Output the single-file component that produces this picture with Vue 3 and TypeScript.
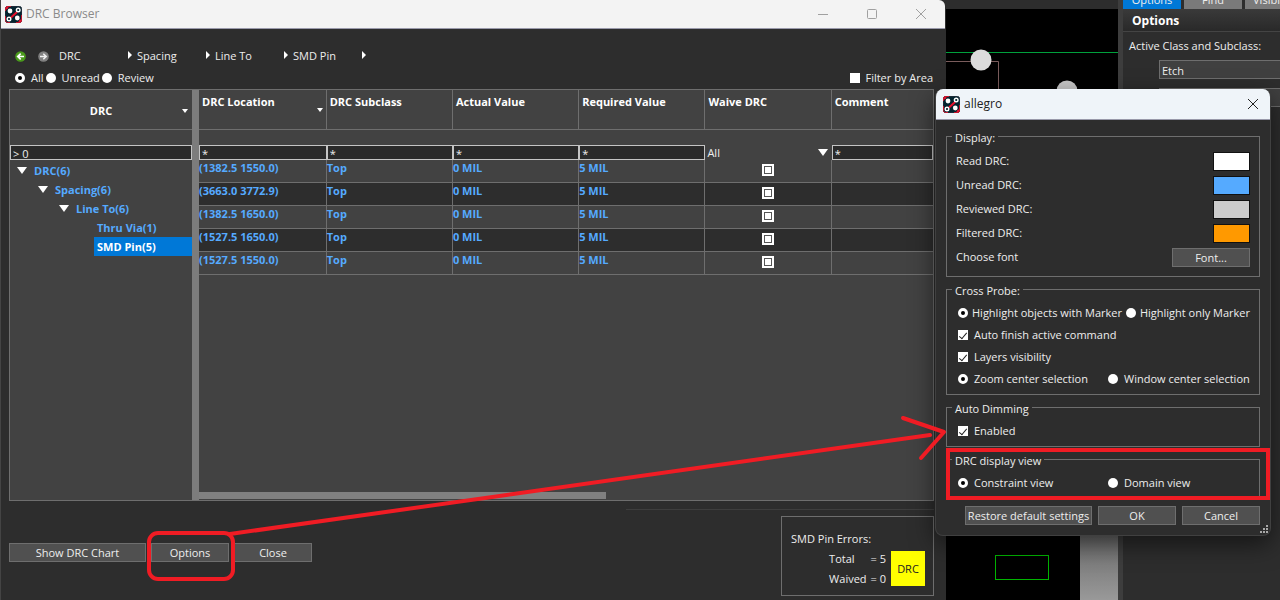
<script setup lang="ts">
import { ref } from 'vue'

const crumbs = ['DRC', 'Spacing', 'Line To', 'SMD Pin']
const scopes = ['All', 'Unread', 'Review']
const scope = ref('All')
const filterByArea = ref(false)

interface TreeNode { label: string; level: number; leaf?: boolean; selected?: boolean }
const tree: TreeNode[] = [
  { label: 'DRC(6)', level: 0 },
  { label: 'Spacing(6)', level: 1 },
  { label: 'Line To(6)', level: 2 },
  { label: 'Thru Via(1)', level: 3, leaf: true },
  { label: 'SMD Pin(5)', level: 3, leaf: true, selected: true },
]

const columns = ['DRC Location', 'DRC Subclass', 'Actual Value', 'Required Value', 'Waive DRC', 'Comment']
const rows = ['(1382.5 1550.0)', '(3663.0 3772.9)', '(1382.5 1650.0)', '(1527.5 1650.0)', '(1527.5 1550.0)']
const filters = ref(['*', '*', '*', '*', 'All', '*'])
const treeFilter = ref('> 0')

const colors = [
  { label: 'Read DRC:', cls: 'white' },
  { label: 'Unread DRC:', cls: 'blue' },
  { label: 'Reviewed DRC:', cls: 'silver' },
  { label: 'Filtered DRC:', cls: 'orange' },
]
const marker = ref('objects')
const center = ref('zoom')
const view = ref('constraint')
const autoFinish = ref(true)
const layers = ref(true)
const dimming = ref(true)
</script>

<template>
  <main class="desktop">
    <svg width="0" height="0" class="defs" aria-hidden="true">
      <symbol id="logo" viewBox="0 0 17 17">
        <rect x="0.5" y="0.5" width="16" height="16" rx="2" fill="#04232f" stroke="#1b2b38" />
        <path d="M0.5 5V2.5a2 2 0 0 1 2-2H6M0.500 10V14.500a2 2 0 0 0 2 2H5M16.500 9V14.500a2 2 0 0 1-2 2H11" fill="none" stroke="#c4142c" />
        <path d="M6 11.5L12 6" stroke="#e8112d" stroke-width="2" />
        <path d="M1 3L3 1M14 16l2-2" stroke="#e8112d" stroke-width="2" />
        <circle cx="5" cy="5" r="2.4" fill="#fff" />
        <circle cx="12.3" cy="12" r="2.4" fill="#fff" />
        <circle cx="13.2" cy="4" r="1.8" fill="none" stroke="#fff" stroke-width="1.4" />
        <circle cx="4" cy="13" r="1.8" fill="none" stroke="#fff" stroke-width="1.4" />
      </symbol>
    </svg>

    <div class="backdrop">
      <div class="board">
        <svg class="board-top" viewBox="0 0 172 100" width="172" height="100" aria-hidden="true">
          <path d="M0 52.500H172" stroke="#00a03c" />
          <path d="M0 61.5H52.5V100" fill="none" stroke="#7a5c5c" />
          <circle cx="35" cy="60" r="10.5" fill="#dcdcdc" />
          <circle cx="121" cy="91" r="10.5" fill="#c8c8c8" />
        </svg>
        <div class="board-bottom">
          <svg class="outline" width="54" height="25" viewBox="0 0 54 25" aria-hidden="true">
            <rect x="0.5" y="0.5" width="53" height="24" fill="none" stroke="#00b400" />
          </svg>
          <div class="board-edge"></div>
        </div>
      </div>
      <aside class="side">
        <nav class="tabs">
          <button class="tab active" type="button">Options</button>
          <button class="tab" type="button">Find</button>
          <button class="tab" type="button">Visibility</button>
        </nav>
        <h2 class="side-title">Options</h2>
        <label class="side-label" for="cls">Active Class and Subclass:</label>
        <select id="cls" class="side-select"><option>Etch</option></select>
        <select class="side-select" aria-label="Subclass"></select>
      </aside>
    </div>

    <section class="window browser">
      <header class="titlebar">
        <svg class="logo" width="17" height="17"><use href="#logo" /></svg>
        <h1>DRC Browser</h1>
        <button class="caption" type="button" aria-label="Minimize"><svg width="12" height="12"><path d="M1 6.500H11" /></svg></button>
        <button class="caption" type="button" aria-label="Maximize"><svg width="12" height="12"><rect x="1.500" y="1.500" width="9" height="9" rx="1" /></svg></button>
        <button class="caption" type="button" aria-label="Close"><svg width="12" height="12"><path d="M1 1L11 11M11 1L1 11" /></svg></button>
      </header>
      <div class="browser-body">
        <nav class="crumbs">
          <button class="nav" type="button" aria-label="Back">
            <svg width="11" height="11" viewBox="0 0 11 11"><circle cx="5.500" cy="5.500" r="5.300" fill="#4a9a1c" /><path d="M9 5.500H3M5.700 2.700L2.800 5.500L5.700 8.300" fill="none" stroke="#fff" stroke-width="1.700" /></svg>
          </button>
          <button class="nav" type="button" aria-label="Forward">
            <svg width="11" height="11" viewBox="0 0 11 11"><circle cx="5.500" cy="5.500" r="5.300" fill="#808080" /><path d="M2 5.500H8M5.300 2.700L8.200 5.500L5.300 8.300" fill="none" stroke="#f0f0f0" stroke-width="1.500" /></svg>
          </button>
          <button v-for="c in crumbs" :key="c" class="crumb" type="button">
            <span>{{ c }}</span>
            <svg width="4" height="8"><path d="M0 0L4 4L0 8Z" fill="#fff" /></svg>
          </button>
        </nav>
        <div class="scope">
          <label v-for="s in scopes" :key="s"><input v-model="scope" type="radio" name="scope" :value="s" />{{ s }}</label>
          <label class="area"><input v-model="filterByArea" type="checkbox" />Filter by Area</label>
        </div>

        <div class="panes">
          <div class="tree-pane">
            <div class="tree-head">DRC<svg width="6" height="4"><path d="M0 0H6L3 4Z" fill="#fff" /></svg></div>
            <div class="gap-row"></div>
            <input v-model="treeFilter" class="filter" type="text" aria-label="Filter tree" />
            <ul class="tree">
              <li v-for="n in tree" :key="n.label" :class="['level-' + n.level, { selected: n.selected }]">
                <svg v-if="!n.leaf" width="10" height="7"><path d="M0 0H10L5 7Z" fill="#fff" /></svg>
                <span>{{ n.label }}</span>
              </li>
            </ul>
          </div>
          <div class="splitter"></div>
          <div class="grid-pane">
            <table>
              <colgroup>
                <col class="first" /><col class="mid" /><col class="mid" /><col class="mid" /><col class="mid" /><col />
              </colgroup>
              <thead>
                <tr class="heads">
                  <th v-for="(c, i) in columns" :key="c" scope="col">
                    <div class="head"><span>{{ c }}</span><svg v-if="i === 0" width="6" height="4"><path d="M0 0H6L3 4Z" fill="#fff" /></svg></div>
                  </th>
                </tr>
                <tr class="spacer"><td colspan="6"></td></tr>
                <tr class="filters">
                  <td v-for="(c, i) in columns" :key="c">
                    <div v-if="i === 4" class="pick">
                      <select v-model="filters[i]" :aria-label="'Filter ' + c"><option>All</option></select>
                      <svg width="10" height="7"><path d="M0 0H10L5 7Z" fill="#fff" /></svg>
                    </div>
                    <input v-else v-model="filters[i]" class="filter" type="text" :aria-label="'Filter ' + c" />
                  </td>
                </tr>
              </thead>
              <tbody>
                <tr v-for="r in rows" :key="r">
                  <td>{{ r }}</td>
                  <td>Top</td>
                  <td>0 MIL</td>
                  <td>5 MIL</td>
                  <td class="waive"><input type="checkbox" :aria-label="'Waive ' + r" /></td>
                  <td></td>
                </tr>
              </tbody>
            </table>
            <div class="scrollbar"></div>
          </div>
        </div>

        <footer class="browser-foot">
          <div class="actions">
            <button class="btn chart" type="button">Show DRC Chart</button>
            <button class="btn" type="button">Options</button>
            <button class="btn" type="button">Close</button>
          </div>
          <div class="summary">
            <div class="errors">
              <p>SMD Pin Errors:</p>
              <dl>
                <dt>Total</dt><dd>= 5</dd>
                <dt>Waived</dt><dd>= 0</dd>
              </dl>
              <span class="badge">DRC</span>
            </div>
          </div>
        </footer>
      </div>
    </section>

    <section class="window dialog" role="dialog" aria-label="allegro">
      <header class="titlebar">
        <svg class="logo" width="17" height="17"><use href="#logo" /></svg>
        <h1>allegro</h1>
        <button class="caption" type="button" aria-label="Close dialog"><svg width="12" height="12"><path d="M1 1L11 11M11 1L1 11" /></svg></button>
      </header>
      <form class="dialog-body" @submit.prevent>
        <fieldset class="display">
          <legend>Display:</legend>
          <div v-for="c in colors" :key="c.cls" class="line">
            <span :id="'color-' + c.cls">{{ c.label }}</span>
            <button type="button" :class="['swatch', c.cls]" :aria-labelledby="'color-' + c.cls"></button>
          </div>
          <div class="line"><span>Choose font</span><button class="btn" type="button">Font...</button></div>
        </fieldset>
        <fieldset class="probe">
          <legend>Cross Probe:</legend>
          <div class="choices tight">
            <label><input v-model="marker" type="radio" name="marker" value="objects" />Highlight objects with Marker</label>
            <label><input v-model="marker" type="radio" name="marker" value="only" />Highlight only Marker</label>
          </div>
          <div class="choices"><label><input v-model="autoFinish" type="checkbox" />Auto finish active command</label></div>
          <div class="choices"><label><input v-model="layers" type="checkbox" />Layers visibility</label></div>
          <div class="choices">
            <label><input v-model="center" type="radio" name="center" value="zoom" />Zoom center selection</label>
            <label><input v-model="center" type="radio" name="center" value="window" />Window center selection</label>
          </div>
        </fieldset>
        <fieldset class="single">
          <legend>Auto Dimming</legend>
          <div class="choices"><label><input v-model="dimming" type="checkbox" />Enabled</label></div>
        </fieldset>
        <fieldset class="single">
          <legend>DRC display view</legend>
          <div class="choices">
            <label><input v-model="view" type="radio" name="view" value="constraint" />Constraint view</label>
            <label><input v-model="view" type="radio" name="view" value="domain" />Domain view</label>
          </div>
        </fieldset>
        <div class="dialog-actions">
          <button class="btn restore" type="button">Restore default settings</button>
          <button class="btn" type="button">OK</button>
          <button class="btn" type="button">Cancel</button>
        </div>
      </form>
      <svg class="grip" width="8" height="8" aria-hidden="true"><path d="M6 0h2v2H6zM3 3h2v2H3zM6 3h2v2H6zM0 6h2v2H0zM3 6h2v2H3zM6 6h2v2H6z" fill="#a8a8a8" /></svg>
    </section>

    <svg class="notes" viewBox="0 0 1280 600" preserveAspectRatio="xMinYMin meet" aria-hidden="true">
      <g fill="none" stroke="#f01c24" stroke-width="4" stroke-linecap="round" stroke-linejoin="round">
        <rect x="149" y="533" width="84" height="46" rx="9" />
        <path d="M230 534L930 435" />
        <path d="M903 418L944 432L921 458" />
        <path d="M948 450H1268V498H948Z" stroke-linejoin="miter" />
      </g>
    </svg>
  </main>
</template>

<style>
body { background: #2d2d2d; }
</style>

<style scoped>
.desktop { position: relative; min-height: 100vh; overflow: hidden; background: #2d2d2d; color: #eee; font: 11px/16px "Open Sans", "Noto Sans", sans-serif; }
.desktop *, .desktop *::before { box-sizing: border-box; }
.defs { position: absolute; }
button, input, select { font: inherit; color: inherit; margin: 0; padding: 0; border: 0; background: none; border-radius: 0; appearance: none; }
h1, h2, p, ul, dl, dd { margin: 0; padding: 0; }

.backdrop { display: flex; justify-content: flex-end; min-height: 100vh; }
.board { display: flex; flex-direction: column; width: 172px; margin-top: 9px; background: #000; }
.board-top { display: block; margin-top: -9px; }
.board-bottom { flex: 1; display: flex; justify-content: space-between; }
.outline { margin: 455px 0 0 49px; }
.board-edge { width: 38px; margin-top: 430px; background: linear-gradient(#666, #999); }
.side { width: 162px; border-left: 5px solid #3d3d3d; background: #2d2d2d; overflow: hidden; white-space: nowrap; }
.tabs { display: flex; gap: 3px; height: 9px; align-items: flex-end; overflow: hidden; }
.tab { flex: none; width: 58px; height: 18px; background: #7a7a7a; color: #eee; }
.tab.active { background: #0078d7; }
.side-title { height: 23px; padding: 4px 9px; border-bottom: 1px solid #444; background: linear-gradient(#3a3a3a, #292929); font-size: 12px; font-weight: 700; color: #fff; }
.side-label { display: block; margin: 6px 6px; }
.side-select { display: block; width: 130px; height: 19px; margin: 0 0 9px 36px; padding: 2px 2px 0; border: 1px solid #6e6e6e; background: #404040; }

.titlebar { display: flex; align-items: center; height: 30px; border-bottom: 1px solid #99a; background: #f3f3f3; color: #8a8a8a; }
.logo { margin: 0 4px 0 4px; }
.titlebar h1 { flex: 1; font-size: 12px; font-weight: 400; }
.caption { display: flex; align-items: center; justify-content: center; width: 49px; height: 28px; }
.caption svg { fill: none; stroke: currentColor; }

.browser { position: absolute; top: 0; bottom: 0; left: 0; right: 335px; display: flex; flex-direction: column; border-left: 1px solid #444; background: #2d2d2d; border-top-right-radius: 6px; overflow: hidden; }
.browser .caption { color: #a0a0a0; }
.browser-body { flex: 1; display: flex; flex-direction: column; padding: 15px 11px 4px 8px; }
.crumbs { display: flex; align-items: center; height: 22px; padding: 2px 0 0 6px; }
.nav { display: flex; width: 23px; }
.crumb { display: flex; align-items: center; justify-content: space-between; width: 78px; padding-left: 5px; }
.crumb svg { margin-bottom: 3px; }
.nav + .crumb { margin-left: -7px; }
.scope { display: flex; align-items: center; height: 23px; padding: 1px 0 0 6px; }
.scope label { display: flex; align-items: center; gap: 6px; margin-right: 2px; }
.scope .area { margin: 0 1px 0 auto; gap: 5px; }

input[type="radio"] { flex: none; width: 10px; height: 10px; border-radius: 5px; background: #fff; }
input[type="radio"]:checked { border: 3px solid #fff; background: #000; }
input[type="checkbox"] { flex: none; width: 10px; height: 10px; background: #fff; }
input[type="checkbox"]:checked { display: grid; place-items: center; }
input[type="checkbox"]:checked::before { content: ""; width: 4px; height: 8px; border: solid #222; border-width: 0 1px 1px 0; rotate: 40deg; }

.panes { display: flex; height: 412px; border: 1px solid #6e6e6e; background: #424242; }
.tree-pane { width: 182px; }
.tree-head { display: flex; align-items: center; justify-content: center; height: 40px; padding-top: 2px; border-bottom: 1px solid #6e6e6e; font-weight: 700; color: #fff; position: relative; }
.tree-head svg { position: absolute; right: 4px; }
.gap-row { height: 15px; }
.filter { display: block; width: 100%; height: 15px; padding: 1px 2px 0; border: 1px solid #c4c4c4; background: #2a2a2a; line-height: 12px; }
.tree { padding-top: 1px; list-style: none; font-weight: 700; color: #55aaff; }
.tree li { display: flex; align-items: center; gap: 7px; height: 19px; margin-left: 7px; }
.tree .level-1 { margin-left: 28px; }
.tree .level-2 { margin-left: 49px; }
.tree .level-3 { margin-left: 84px; padding-left: 3px; }
.tree .selected { background: #0078d7; color: #fff; }
.splitter { width: 7px; background: #7c7c7c; }
.grid-pane { flex: 1; min-width: 0; display: flex; flex-direction: column; justify-content: space-between; }
table { width: 100%; table-layout: fixed; border-collapse: separate; border-spacing: 0; }
.first { width: 17.4%; }
.mid { width: 17.2%; }
th, td { padding: 0; text-align: left; vertical-align: top; }
.heads th { height: 40px; padding: 4px 3px 0; border: solid #6e6e6e; border-width: 0 1px 1px 0; color: #fff; font-weight: 700; }
.heads th:last-child, tbody td:last-child { border-right: 0; }
.head { display: flex; justify-content: space-between; align-items: flex-start; white-space: nowrap; }
.head svg { margin-top: 14px; }
.spacer td { height: 15px; }
.pick { display: flex; align-items: center; height: 15px; padding: 0 4px 0 2px; }
.pick select { flex: 1; }
tbody td { height: 23px; border: solid #6e6e6e; border-width: 0 1px 1px 0; color: #55aaff; font-weight: 700; }
tbody tr:nth-child(even) { background: #2d2d2d; }
tbody .waive { padding-top: 4px; text-align: center; }
.waive input { display: block; margin: 0 auto; width: 12px; height: 12px; border: 2px solid #fff; outline: 1px solid #555; outline-offset: -3px; }
.scrollbar { width: 407px; height: 7px; margin-bottom: 1px; background: #808080; }

.btn { height: 19px; min-width: 78px; padding-top: 1px; border: 1px solid #6e6e6e; background: #505050; line-height: 16px; }
.browser-foot { flex: 1; display: flex; justify-content: space-between; align-items: flex-start; }
.actions { display: flex; gap: 5px; padding-top: 42px; }
.chart { width: 137px; }
.summary { display: flex; justify-content: flex-end; width: 308px; margin-top: 8px; padding-top: 6px; border-top: 1px solid #3e3e3e; }
.errors { display: grid; grid-template-columns: 1fr 34px; grid-template-rows: 20px 1fr; column-gap: 5px; width: 153px; height: 80px; padding: 14px 8px 9px 9px; border: 1px solid #6e6e6e; }
.errors p { grid-column: 1 / 3; }
.errors dl { display: grid; grid-template-columns: auto auto; align-content: start; gap: 4px; justify-self: end; }
.badge { display: grid; place-items: center; height: 35px; background: #ff0; color: #222; }

.dialog { position: absolute; top: 89px; right: 9px; width: 336px; border: 1px solid #404040; border-top: 0; border-radius: 8px; background: #2d2d2d; overflow: hidden; box-shadow: 0 8px 24px #0008; }
.dialog .titlebar { height: 31px; background: #eff4f9; color: #222; }
.dialog .logo { margin-left: 7px; }
.dialog .caption { width: 35px; }
.dialog-body { display: flex; flex-direction: column; gap: 2px; padding: 6px 10px 10px; }
fieldset { min-width: 0; margin: 0; padding: 3px 9px 0; border: 1px solid #6e6e6e; }
legend { margin-left: -4px; padding: 4px 3px 0; }
.display { height: 151px; }
.line { display: flex; align-items: center; justify-content: space-between; height: 24px; }
.swatch { width: 37px; height: 19px; border: 1px solid #111; }
.white { background: #fff; }
.blue { background: #55aaff; }
.silver { background: #ccc; }
.orange { background: #ff9900; }
.probe { height: 116px; }
.single { height: 50px; }
.choices { display: grid; grid-template-columns: 150px 1fr; height: 22px; align-items: center; white-space: nowrap; padding-left: 2px; }
.choices.tight { grid-template-columns: auto auto; justify-content: space-between; }
.choices label { display: flex; align-items: center; gap: 6px; }
.choices.tight label { gap: 4px; }
.dialog-actions { display: flex; justify-content: flex-end; gap: 6px; padding-top: 5px; }
.restore { width: 127px; }
.grip { position: absolute; right: 2px; bottom: 2px; }
.notes { position: absolute; top: 0; left: 0; width: 100%; pointer-events: none; }
</style>
